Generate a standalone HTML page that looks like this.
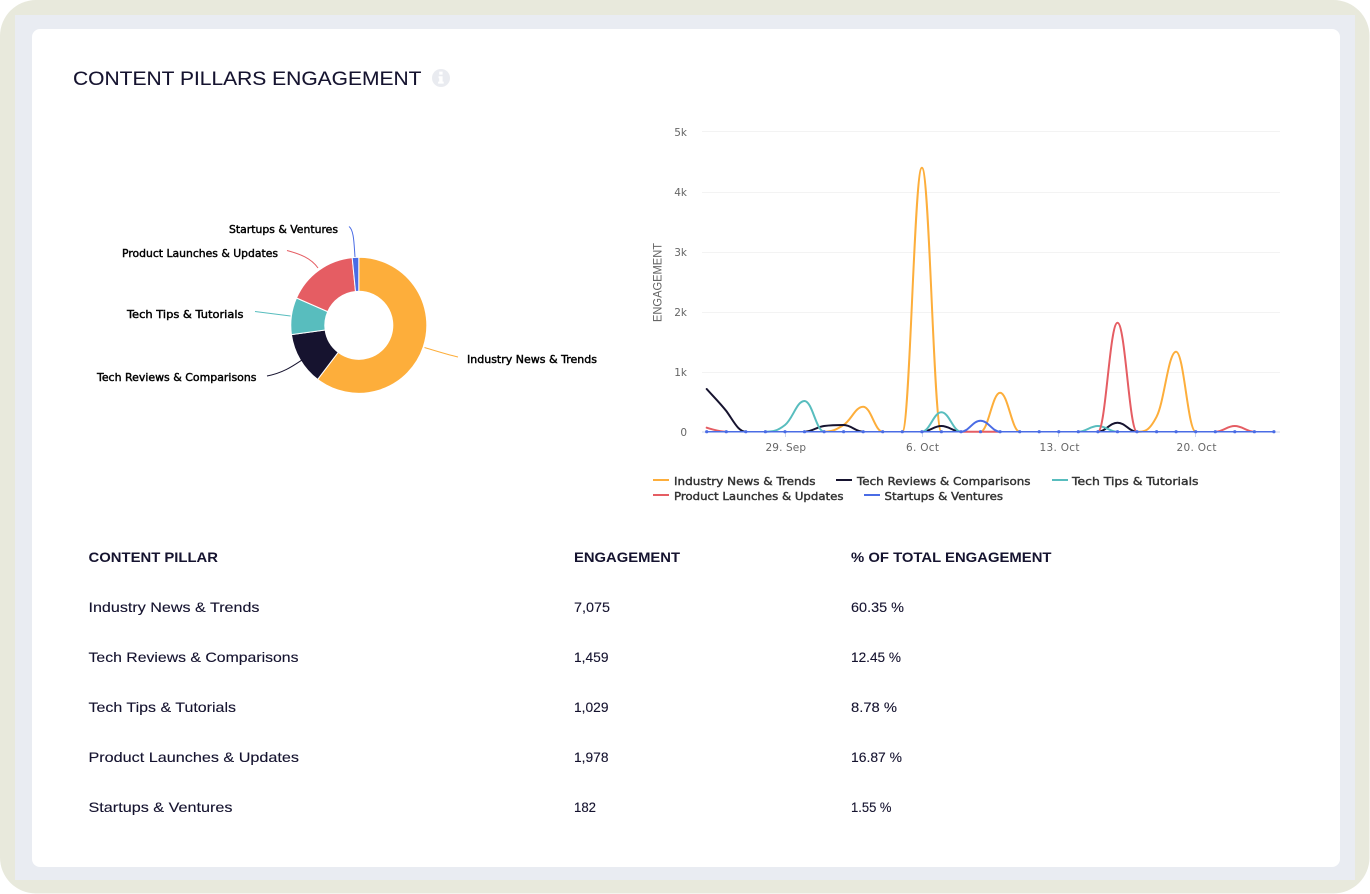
<!DOCTYPE html>
<html lang="en">
<head>
<meta charset="utf-8">
<title>Content Pillars Engagement</title>
<style>
html,body{margin:0;padding:0;background:#fff;}
svg{display:block;}
.t{font-family:"Liberation Sans",Arial,sans-serif;fill:#15132f;font-size:14px;stroke:#15132f;stroke-width:.12px;}
.h{font-family:"Liberation Sans",Arial,sans-serif;fill:#15132f;font-size:14px;font-weight:700;}
.d{font-family:"DejaVu Sans",sans-serif;font-size:10.5px;fill:#000;stroke:#000;stroke-width:.42px;}
.l{font-family:"DejaVu Sans",sans-serif;font-size:11px;fill:#333;stroke:#333;stroke-width:.42px;}
.a{font-family:"DejaVu Sans",sans-serif;font-size:10.5px;fill:#666;}
.s{fill:none;stroke-width:2;stroke-linejoin:round;stroke-linecap:round;}
</style>
</head>
<body>
<svg width="1370" height="894" viewBox="0 0 1370 894" xmlns="http://www.w3.org/2000/svg">
<rect x="0" y="0" width="1369.5" height="893.5" rx="36" ry="36" fill="#e8e9dc"/>
<rect x="15" y="15" width="1340" height="865" fill="#e9ecf2"/>
<rect x="32" y="29" width="1308" height="838" rx="8" ry="8" fill="#fff"/>

<text x="73" y="85" textLength="348.5" lengthAdjust="spacingAndGlyphs" font-family="'Liberation Sans',Arial,sans-serif" font-size="19.5" fill="#15132f" stroke="#15132f" stroke-width=".1">CONTENT PILLARS ENGAGEMENT</text>
<circle cx="441" cy="78" r="9" fill="#e9ebf0"/>
<path d="M439.2 71.6h3.4v3h-3.4zM438.6 76.2h4v5.4h1.1v2h-5.6v-2h1.1v-3.4h-.6z" fill="#fff"/>

<!-- donut -->
<g stroke="#fff" stroke-width="1" stroke-linejoin="round">
<path d="M358.8 257.3A68 68 0 1 1 317.64 379.43L338.22 352.36A34 34 0 1 0 358.8 291.3Z" fill="#fdae3b"/>
<path d="M317.64 379.43A68 68 0 0 1 291.45 334.67L325.12 329.99A34 34 0 0 0 338.22 352.36Z" fill="#16132f"/>
<path d="M291.45 334.67A68 68 0 0 1 296.53 297.98L327.67 311.64A34 34 0 0 0 325.12 329.99Z" fill="#58bdbe"/>
<path d="M296.53 297.98A68 68 0 0 1 352.19 257.62L355.5 291.46A34 34 0 0 0 327.67 311.64Z" fill="#e55d63"/>
<path d="M352.19 257.62A68 68 0 0 1 358.8 257.3L358.8 291.3A34 34 0 0 0 355.5 291.46Z" fill="#4a6ce5"/>
</g>
<g fill="none" stroke-width="1">
<path d="M424.5 347.5C436 351 447 354.5 458 357" stroke="#fdae3b"/>
<path d="M302 360C293 366 283 373 267 376" stroke="#16132f"/>
<path d="M290.5 316C279 314.5 267 313 255 311.5" stroke="#58bdbe"/>
<path d="M318 268C311 258 300 254 287 250.5" stroke="#e55d63"/>
<path d="M355 257C354 244 354 230 349 226.5" stroke="#4a6ce5"/>
</g>
<text class="d" x="467" y="363" textLength="130" lengthAdjust="spacingAndGlyphs">Industry News &amp; Trends</text>
<text class="d" x="97" y="381" textLength="159.5" lengthAdjust="spacingAndGlyphs">Tech Reviews &amp; Comparisons</text>
<text class="d" x="127" y="318" textLength="116.5" lengthAdjust="spacingAndGlyphs">Tech Tips &amp; Tutorials</text>
<text class="d" x="122" y="257" textLength="156" lengthAdjust="spacingAndGlyphs">Product Launches &amp; Updates</text>
<text class="d" x="229" y="233" textLength="109" lengthAdjust="spacingAndGlyphs">Startups &amp; Ventures</text>

<!-- line chart grid -->
<g stroke="#f3f3f3" stroke-width="1">
<path d="M702 131.5H1280M702 192.5H1280M702 252.5H1280M702 312.5H1280M702 372.5H1280"/>
</g>
<path d="M702 432H1280" stroke="#ccd6eb" stroke-width="1"/>
<path d="M785.5 432v5M922.5 432v5M1058.5 432v5M1195.5 432v5" stroke="#ccd6eb" stroke-width="1"/>
<text class="a" x="687" y="136" text-anchor="end">5k</text>
<text class="a" x="687" y="196" text-anchor="end">4k</text>
<text class="a" x="687" y="256" text-anchor="end">3k</text>
<text class="a" x="687" y="316" text-anchor="end">2k</text>
<text class="a" x="687" y="376" text-anchor="end">1k</text>
<text class="a" x="687" y="436" text-anchor="end">0</text>
<text class="a" x="765.5" y="451" textLength="40.5" lengthAdjust="spacing">29. Sep</text>
<text class="a" x="906" y="451" textLength="33" lengthAdjust="spacing">6. Oct</text>
<text class="a" x="1039.5" y="451" textLength="40" lengthAdjust="spacing">13. Oct</text>
<text class="a" x="1176.5" y="451" textLength="40" lengthAdjust="spacing">20. Oct</text>
<text transform="translate(661.5 322) rotate(-90)" x="0" y="0" textLength="79" lengthAdjust="spacingAndGlyphs" font-family="'Liberation Sans',Arial,sans-serif" font-size="12" fill="#666">ENGAGEMENT</text>

<!-- series -->
<path class="s" stroke="#fdae3b" d="M824.1 431.7C831.9 431.7 835.8 430 843.6 425C851.4 420 855.4 406.7 863.2 406.7C871 406.7 874.9 431.7 882.7 431.7M902.3 431.7C910.1 431.7 914.1 167.7 921.9 167.7C929.7 167.7 933.6 431.7 941.4 431.7M980.5 431.7C988.3 431.7 992.3 392.7 1000.1 392.7C1007.9 392.7 1011.9 431.7 1019.7 431.7M1137 431.7C1144.8 431.7 1148.8 431.7 1156.6 416.7C1164.4 401.7 1168.3 351.7 1176.1 351.7C1183.9 351.7 1187.9 431.7 1195.7 431.7"/>
<path class="s" stroke="#16132f" d="M706.7 389C712 395 720 403 726.3 411C733 420 738 431.7 745.8 431.7M804.5 431.7C812.3 431.7 816.3 427 824.1 426C831.9 425 835.8 425 843.6 425C851.4 425 855.4 431.7 863.2 431.7M921.9 431.7C929.7 431.7 933.6 426 941.4 426C949.2 426 953.2 431.7 961 431.7M1097.9 431.7C1105.7 431.7 1109.7 422.7 1117.5 422.7C1125.3 422.7 1129.2 431.7 1137 431.7"/>
<path class="s" stroke="#58bdbe" d="M765.4 431.7C773.2 431.7 777.2 431.1 785 425C792.8 418.9 796.7 401 804.5 401C812.3 401 816.3 431.7 824.1 431.7M921.9 431.7C929.7 431.7 933.6 412.3 941.4 412.3C949.2 412.3 953.2 431.7 961 431.7M1078.3 431.7C1086.1 431.7 1090.1 426 1097.9 426C1105.7 426 1109.7 431.7 1117.5 431.7"/>
<path class="s" stroke="#e55d63" d="M706.7 427.7C706.7 427.7 718.5 431.7 726.3 431.7M961 431.7H1000.1M1097.9 431.7C1105.7 431.7 1109.7 322.7 1117.5 322.7C1125.3 322.7 1129.2 431.7 1137 431.7M1215.3 431.7C1223.1 431.7 1227 426 1234.8 426C1242.6 426 1246.6 431.7 1254.4 431.7"/>
<path class="s" stroke="#4a6ce5" stroke-width="1.5" style="stroke-width:1.5" d="M706.7 431.7H961M1000.1 431.7H1273.9"/>
<path class="s" stroke="#4a6ce5" d="M961 431.7C968.8 431.7 972.7 420.7 980.5 420.7C988.3 420.7 992.3 431.7 1000.1 431.7"/>
<g fill="#4a6ce5">
<circle cx="706.7" cy="431.7" r="1.6"/><circle cx="726.3" cy="431.7" r="1.6"/><circle cx="745.8" cy="431.7" r="1.6"/><circle cx="765.4" cy="431.7" r="1.6"/><circle cx="785" cy="431.7" r="1.6"/><circle cx="804.5" cy="431.7" r="1.6"/><circle cx="824.1" cy="431.7" r="1.6"/><circle cx="843.6" cy="431.7" r="1.6"/><circle cx="863.2" cy="431.7" r="1.6"/><circle cx="882.7" cy="431.7" r="1.6"/><circle cx="902.3" cy="431.7" r="1.6"/><circle cx="921.9" cy="431.7" r="1.6"/><circle cx="941.4" cy="431.7" r="1.6"/><circle cx="961" cy="431.7" r="1.6"/><circle cx="980.5" cy="431.7" r="1.6"/><circle cx="1000.1" cy="431.7" r="1.6"/><circle cx="1019.7" cy="431.7" r="1.6"/><circle cx="1039.2" cy="431.7" r="1.6"/><circle cx="1058.8" cy="431.7" r="1.6"/><circle cx="1078.3" cy="431.7" r="1.6"/><circle cx="1097.9" cy="431.7" r="1.6"/><circle cx="1117.5" cy="431.7" r="1.6"/><circle cx="1137" cy="431.7" r="1.6"/><circle cx="1156.6" cy="431.7" r="1.6"/><circle cx="1176.1" cy="431.7" r="1.6"/><circle cx="1195.7" cy="431.7" r="1.6"/><circle cx="1215.3" cy="431.7" r="1.6"/><circle cx="1234.8" cy="431.7" r="1.6"/><circle cx="1254.4" cy="431.7" r="1.6"/><circle cx="1273.9" cy="431.7" r="1.6"/>
</g>

<!-- legend -->
<g stroke-width="2" fill="none">
<path d="M653 480H669" stroke="#fdae3b"/>
<path d="M836 480H852" stroke="#16132f"/>
<path d="M1052 480H1068" stroke="#58bdbe"/>
<path d="M653 495H669" stroke="#e55d63"/>
<path d="M864 495H880" stroke="#4a6ce5"/>
</g>
<text class="l" x="674" y="485" textLength="141.5" lengthAdjust="spacingAndGlyphs">Industry News &amp; Trends</text>
<text class="l" x="857" y="485" textLength="173.5" lengthAdjust="spacingAndGlyphs">Tech Reviews &amp; Comparisons</text>
<text class="l" x="1072" y="485" textLength="126.5" lengthAdjust="spacingAndGlyphs">Tech Tips &amp; Tutorials</text>
<text class="l" x="674" y="500" textLength="169.5" lengthAdjust="spacingAndGlyphs">Product Launches &amp; Updates</text>
<text class="l" x="884.5" y="500" textLength="118.5" lengthAdjust="spacingAndGlyphs">Startups &amp; Ventures</text>

<!-- table -->
<text class="h" x="88.5" y="562" textLength="129.5" lengthAdjust="spacingAndGlyphs">CONTENT PILLAR</text>
<text class="h" x="574" y="562" textLength="106" lengthAdjust="spacingAndGlyphs">ENGAGEMENT</text>
<text class="h" x="851" y="562" textLength="200.5" lengthAdjust="spacingAndGlyphs">% OF TOTAL ENGAGEMENT</text>

<text class="t" x="88.5" y="612" textLength="171" lengthAdjust="spacingAndGlyphs">Industry News &amp; Trends</text>
<text class="t" x="574" y="612" textLength="36" lengthAdjust="spacingAndGlyphs">7,075</text>
<text class="t" x="851" y="612" textLength="53" lengthAdjust="spacingAndGlyphs">60.35 %</text>

<text class="t" x="88.5" y="662" textLength="210" lengthAdjust="spacingAndGlyphs">Tech Reviews &amp; Comparisons</text>
<text class="t" x="574" y="662" textLength="34.5" lengthAdjust="spacingAndGlyphs">1,459</text>
<text class="t" x="851" y="662" textLength="50" lengthAdjust="spacingAndGlyphs">12.45 %</text>

<text class="t" x="88.5" y="712" textLength="147.5" lengthAdjust="spacingAndGlyphs">Tech Tips &amp; Tutorials</text>
<text class="t" x="574" y="712" textLength="34.5" lengthAdjust="spacingAndGlyphs">1,029</text>
<text class="t" x="851" y="712" textLength="46" lengthAdjust="spacingAndGlyphs">8.78 %</text>

<text class="t" x="88.5" y="762" textLength="210.5" lengthAdjust="spacingAndGlyphs">Product Launches &amp; Updates</text>
<text class="t" x="574" y="762" textLength="34.5" lengthAdjust="spacingAndGlyphs">1,978</text>
<text class="t" x="851" y="762" textLength="51" lengthAdjust="spacingAndGlyphs">16.87 %</text>

<text class="t" x="88.5" y="812" textLength="144" lengthAdjust="spacingAndGlyphs">Startups &amp; Ventures</text>
<text class="t" x="574" y="812" textLength="22" lengthAdjust="spacingAndGlyphs">182</text>
<text class="t" x="851" y="812" textLength="40.5" lengthAdjust="spacingAndGlyphs">1.55 %</text>
</svg>
</body>
</html>
